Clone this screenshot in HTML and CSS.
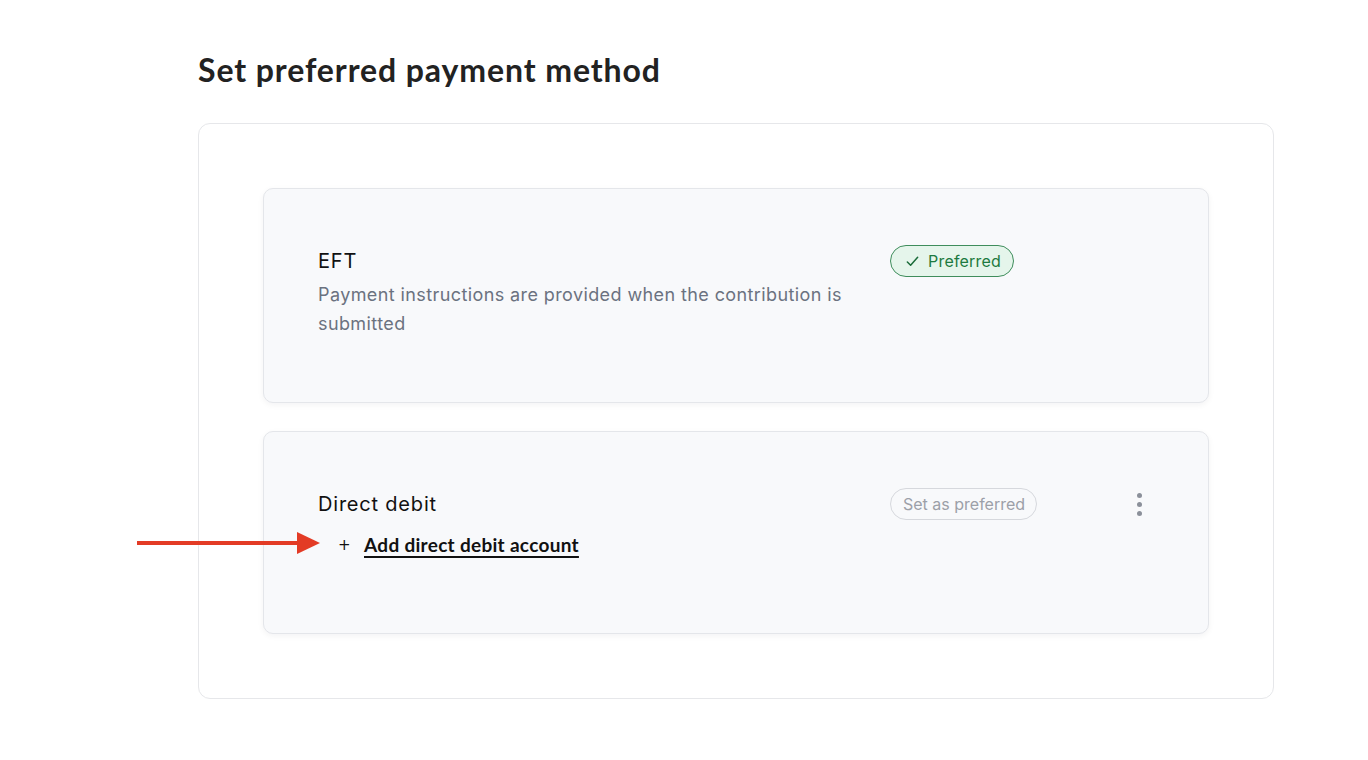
FILE: index.html
```html
<!DOCTYPE html>
<html lang="en">
<head>
<meta charset="utf-8">
<title>Set preferred payment method</title>
<link rel="stylesheet" href="styles.css">
</head>
<body>
<main class="page">
  <h1 class="title">Set preferred payment method</h1>
  <section class="panel">
    <div class="method">
      <div class="method-name">EFT</div>
      <div class="method-status">
        <span class="badge badge-preferred">
          <svg class="check" viewBox="0 0 16 16" width="15" height="15" aria-hidden="true"><path d="M2.5 8.5 L6 12 L13.5 3.5" fill="none" stroke="currentColor" stroke-width="1.6" stroke-linecap="round" stroke-linejoin="round"/></svg>
          Preferred
        </span>
      </div>
      <div class="method-actions"></div>
      <p class="method-desc">Payment instructions are provided when the contribution is submitted</p>
    </div>
    <div class="method">
      <div class="method-name">Direct debit</div>
      <div class="method-status">
        <button class="badge badge-set" type="button">Set as preferred</button>
      </div>
      <div class="method-actions">
        <button class="kebab" type="button" aria-label="More options">
          <span class="dot"></span><span class="dot"></span><span class="dot"></span>
        </button>
      </div>
      <div class="method-extra">
        <a class="add-link" href="#"><span class="plus">+</span><span class="add-text">Add direct debit account</span></a>
      </div>
    </div>
  </section>
  <svg class="pointer-arrow" width="190" height="26" viewBox="0 0 190 26" aria-hidden="true">
    <rect x="1" y="11" width="165" height="4" fill="#e33b25"/>
    <polygon points="161,2 184,13 161,24" fill="#e33b25"/>
  </svg>
</main>
</body>
</html>
```

FILE: styles.css
```css
* { box-sizing: border-box; }

html, body {
  margin: 0;
  padding: 0;
  background: #ffffff;
}

body {
  font-family: Inter, "Liberation Sans", sans-serif;
  color: #111827;
}

.page {
  position: relative;
  padding: 47px 0 60px 198px;
}

.title {
  margin: 0 0 36px 0;
  font-family: Lato, "Open Sans", sans-serif;
  font-size: 32px;
  font-weight: 700;
  line-height: 40px;
  color: #222222;
  letter-spacing: 0.9px;
  position: relative;
  top: 3px;
}

.panel {
  width: 1076px;
  border: 1px solid #e6e7ea;
  border-radius: 12px;
  padding: 64px;
  display: flex;
  flex-direction: column;
  gap: 28px;
  background: #fff;
}

.method {
  display: grid;
  grid-template-columns: 1fr 229px 40px;
  grid-template-rows: 32px auto;
  align-items: center;
  background: #f8f9fb;
  border: 1px solid #e4e6ea;
  border-radius: 10px;
  box-shadow: 0 2px 6px rgba(17, 24, 39, 0.05);
  padding: 56px 49px 64px 54px;
}

.method-name {
  font-size: 20px;
  line-height: 28px;
  color: #111111;
  letter-spacing: 0.8px;
}

.method-status {
  display: flex;
  align-items: center;
}

.method-actions {
  display: flex;
  justify-content: center;
  align-items: center;
}

.method-desc {
  grid-column: 1 / 2;
  margin: 3px 0 0 0;
  font-size: 18px;
  line-height: 29px;
  color: #6b7280;
  letter-spacing: 0.4px;
}

.method-extra {
  grid-column: 1 / 2;
  padding-top: 3px;
  padding-bottom: 2px;
}

.badge {
  display: inline-flex;
  align-items: center;
  height: 32px;
  border-radius: 999px;
  font-family: Inter, "Liberation Sans", sans-serif;
  font-size: 16px;
  line-height: 20px;
}

.badge-preferred {
  padding: 0 12px 0 14px;
  gap: 8px;
  background: #e5f5eb;
  border: 1px solid #3f8d5c;
  color: #1d7a40;
  letter-spacing: 0.2px;
}

.badge-preferred .check {
  color: #1a6b39;
}

.badge-set {
  padding: 0 11px 0 12px;
  background: transparent;
  border: 1px solid #d6d8dd;
  color: #9ca0a8;
  cursor: pointer;
}

.kebab {
  display: flex;
  flex-direction: column;
  align-items: center;
  gap: 4px;
  background: none;
  border: 0;
  padding: 4px;
  cursor: pointer;
}

.dot {
  width: 5px;
  height: 5px;
  border-radius: 50%;
  background: #8b909a;
}

.add-link {
  display: inline-flex;
  align-items: center;
  padding: 8px 0 8px 20px;
  color: #111111;
  text-decoration: none;
}

.plus {
  font-family: "DejaVu Sans", sans-serif;
  font-size: 15px;
  line-height: 28px;
  width: 26px;
}

.add-text {
  font-family: Lato, "Open Sans", sans-serif;
  font-weight: 700;
  font-size: 19px;
  line-height: 28px;
  letter-spacing: 0.3px;
  text-decoration: underline;
  text-underline-offset: 4px;
  text-decoration-thickness: 1.5px;
}

.pointer-arrow {
  position: absolute;
  left: 136px;
  top: 530px;
}
```
